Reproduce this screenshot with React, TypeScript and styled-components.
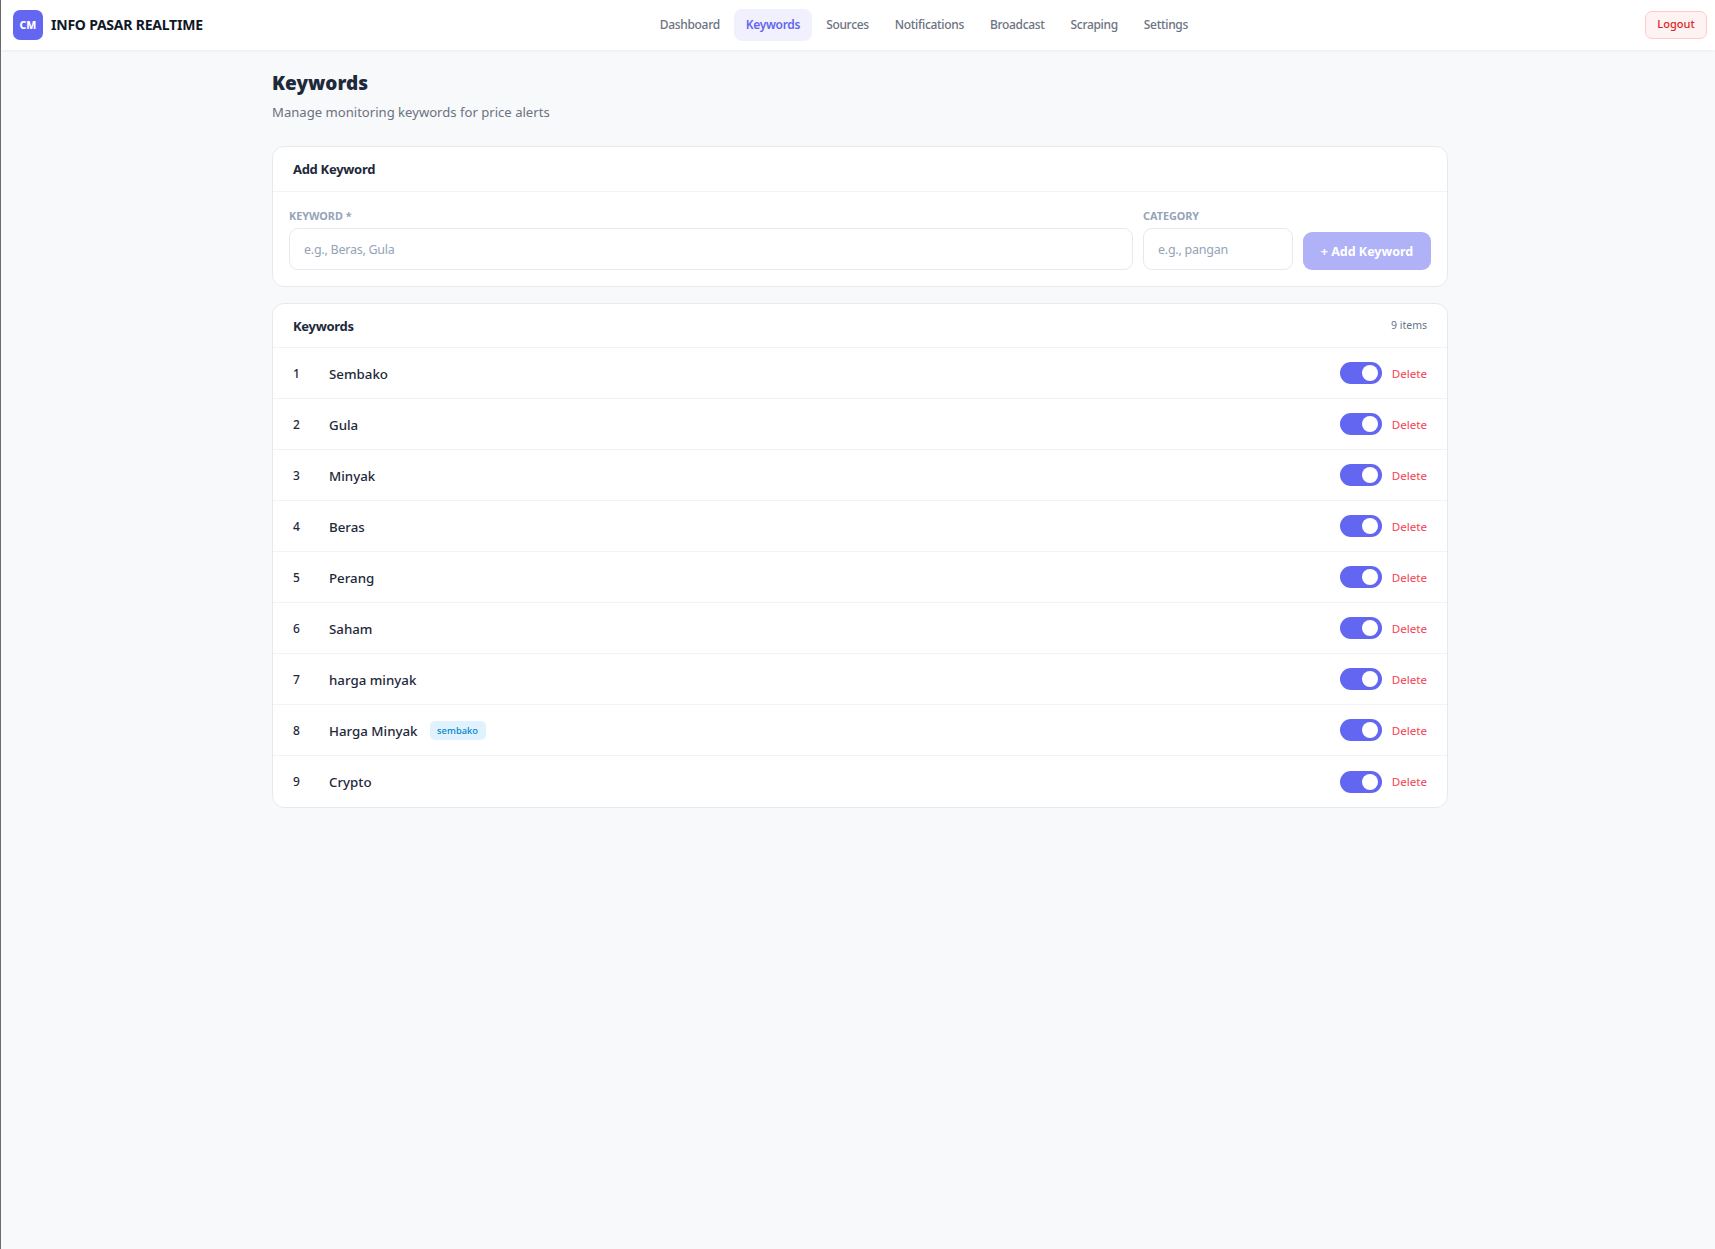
import React from 'react';
import styled, { createGlobalStyle } from 'styled-components';

const Global = createGlobalStyle`
  html, body { margin: 0; padding: 0; height: 100%; }
  body { background: #f8f9fb; font-family: "Noto Sans", "Open Sans", sans-serif; color: #1e293b; }
  #root { min-height: 100%; }
  * { box-sizing: border-box; }
`;

const Shell = styled.div`
  min-height: 1249px;
  border-left: 1px solid #6b6b6b;
  background: #f8f9fb;
`;
const Nav = styled.nav`
  height: 50px;
  background: #fff;
  display: flex;
  align-items: center;
  justify-content: space-between;
  padding: 0 8px 0 12px;
  box-shadow: 0 1px 3px rgba(15, 23, 42, 0.06);
`;
const Brand = styled.div`
  display: flex;
  align-items: center;
  gap: 8px;
`;
const BrandName = styled.span`
  padding-bottom: 2px;
  font-size: 14px;
  font-weight: 700;
  letter-spacing: -0.22px;
  color: #111827;
`;
const Logo = styled.div`
  width: 30px;
  height: 30px;
  border-radius: 7px;
  background: #6366f1;
  color: #fff;
  font-size: 10.5px;
  font-weight: 800;
  display: flex;
  align-items: center;
  justify-content: center;
`;
const Links = styled.div`
  display: flex;
  gap: 2px;
`;
const NavLink = styled.a<{ $active?: boolean }>`
  height: 32px;
  padding: 0 12px 2px;
  border-radius: 8px;
  display: flex;
  align-items: center;
  font-size: 12px;
  letter-spacing: -0.32px;
  font-weight: ${p => (p.$active ? 600 : 500)};
  color: ${p => (p.$active ? '#6366f1' : '#6b7280')};
  background: ${p => (p.$active ? '#f1f1fe' : 'transparent')};
`;
const Logout = styled.button`
  height: 28px;
  width: 62px;
  padding: 0 0 3px;
  border: 1px solid #fecaca;
  border-radius: 7px;
  background: #fef2f2;
  color: #dc2626;
  font: 500 11px "Noto Sans", sans-serif;
`;
const Page = styled.div`
  padding-left: 4px;
`;
const Main = styled.main`
  width: 1176px;
  margin: 0 auto;
  padding-top: 20px;
`;
const Title = styled.h1`
  margin: 0;
  font-size: 19px;
  line-height: 26px;
  font-weight: 900;
  color: #1e293b;
`;
const Subtitle = styled.p`
  margin: 6px 0 0;
  font-size: 13.1px;
  line-height: 20px;
  color: #6b7280;
`;
const Card = styled.section`
  margin-top: 24px;
  background: #fff;
  border: 1px solid #e5e9f0;
  border-radius: 12px;
  overflow: hidden;
  & + & { margin-top: 16px; }
`;
const CardHeader = styled.header<{ $height: number }>`
  height: ${p => p.$height}px;
  padding: 0 20px;
  display: flex;
  align-items: center;
  justify-content: space-between;
  border-bottom: 1px solid #f1f3f7;
`;
const CardTitle = styled.h2`
  margin: 0;
  font-size: 13px;
  font-weight: 700;
  letter-spacing: -0.3px;
  color: #1e293b;
`;
const Count = styled.span`
  padding-bottom: 2px;
  font-size: 10.5px;
  color: #64748b;
`;
const Form = styled.form`
  display: flex;
  align-items: flex-end;
  gap: 10px;
  padding: 16px;
`;
const Field = styled.label<{ $grow?: boolean }>`
  display: flex;
  flex-direction: column;
  gap: 4px;
  flex: ${p => (p.$grow ? '1' : '0 0 150px')};
`;
const FieldLabel = styled.span`
  font-size: 10.8px;
  line-height: 16px;
  font-weight: 700;
  color: #94a3b8;
  text-transform: uppercase;
`;
const Input = styled.input`
  height: 42px;
  width: 100%;
  padding: 0 14px;
  border: 1px solid #e5e9f0;
  border-radius: 9px;
  font: 400 12.5px "Noto Sans", sans-serif;
  letter-spacing: -0.25px;
  background: #fff;
  &::placeholder { color: #94a3b8; opacity: 1; }
`;
const AddButton = styled.button`
  height: 38px;
  width: 128px;
  padding: 0;
  border: 0;
  border-radius: 9px;
  background: #6366f1;
  opacity: 0.5;
  color: #fff;
  font: 700 12.5px "Noto Sans", sans-serif;
`;
const Row = styled.div`
  height: 51px;
  padding: 0 20px;
  display: flex;
  align-items: center;
  border-bottom: 1px solid #f1f3f7;
  &:last-child { border-bottom: 0; }
`;
const Num = styled.span`
  width: 36px;
  font-size: 12px;
  font-weight: 500;
  color: #1e293b;
`;
const Name = styled.span`
  padding-top: 1px;
  font-size: 13.3px;
  font-weight: 500;
  color: #1e293b;
`;
const Badge = styled.span`
  margin-left: 12px;
  height: 19px;
  width: 56px;
  border-radius: 5px;
  background: #e0f2fe;
  color: #0284c7;
  font-size: 9.4px;
  font-weight: 500;
  display: flex;
  align-items: center;
  justify-content: center;
`;
const Actions = styled.div`
  margin-left: auto;
  display: flex;
  align-items: center;
  gap: 10px;
`;
const Toggle = styled.span`
  width: 42px;
  height: 22px;
  border-radius: 11px;
  background: #6366f1;
  display: flex;
  align-items: center;
  justify-content: flex-end;
  padding-right: 4px;
`;
const Knob = styled.span`
  width: 16px;
  height: 16px;
  border-radius: 50%;
  background: #fff;
`;
const Delete = styled.button`
  border: 0;
  padding: 1px 0 0;
  background: none;
  color: #f43f4f;
  font: 400 11.6px/16px "Noto Sans", sans-serif;
`;

const links = ['Dashboard', 'Keywords', 'Sources', 'Notifications', 'Broadcast', 'Scraping', 'Settings'];
const rows: { name: string; tag?: string }[] = [
  { name: 'Sembako' }, { name: 'Gula' }, { name: 'Minyak' }, { name: 'Beras' }, { name: 'Perang' },
  { name: 'Saham' }, { name: 'harga minyak' }, { name: 'Harga Minyak', tag: 'sembako' }, { name: 'Crypto' },
];

export default function App() {
  return (
    <Shell>
      <Global />
      <Nav>
        <Brand><Logo>CM</Logo><BrandName>INFO PASAR REALTIME</BrandName></Brand>
        <Links>
          {links.map(l => <NavLink key={l} $active={l === 'Keywords'}>{l}</NavLink>)}
        </Links>
        <Logout>Logout</Logout>
      </Nav>
      <Page>
        <Main>
          <Title>Keywords</Title>
          <Subtitle>Manage monitoring keywords for price alerts</Subtitle>
          <Card>
            <CardHeader $height={45}><CardTitle>Add Keyword</CardTitle></CardHeader>
            <Form>
              <Field $grow><FieldLabel>Keyword *</FieldLabel><Input placeholder="e.g., Beras, Gula" /></Field>
              <Field><FieldLabel>Category</FieldLabel><Input placeholder="e.g., pangan" /></Field>
              <AddButton type="button">+ Add Keyword</AddButton>
            </Form>
          </Card>
          <Card>
            <CardHeader $height={44}><CardTitle>Keywords</CardTitle><Count>9 items</Count></CardHeader>
            {rows.map((r, i) => (
              <Row key={r.name}>
                <Num>{i + 1}</Num>
                <Name>{r.name}</Name>
                {r.tag && <Badge>{r.tag}</Badge>}
                <Actions><Toggle><Knob /></Toggle><Delete>Delete</Delete></Actions>
              </Row>
            ))}
          </Card>
        </Main>
      </Page>
    </Shell>
  );
}
